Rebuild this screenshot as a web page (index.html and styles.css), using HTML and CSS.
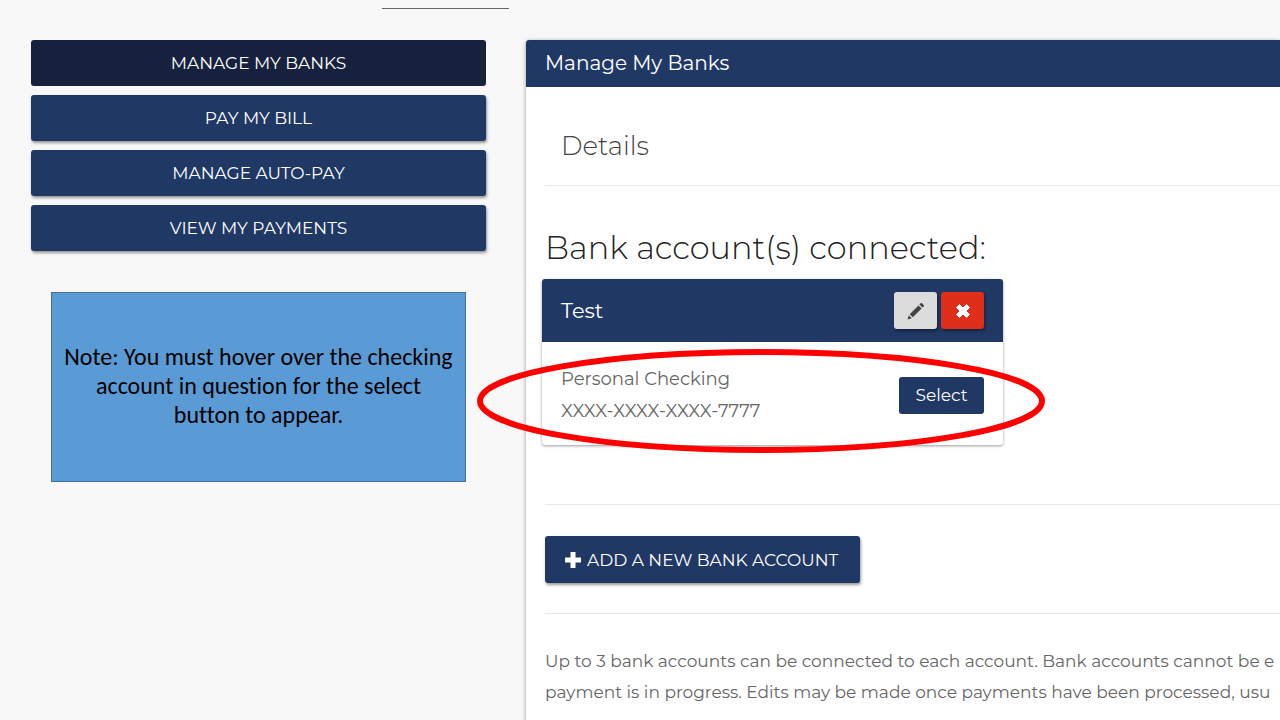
FILE: index.html
```html
<!DOCTYPE html>
<html lang="en">
<head>
  <meta charset="UTF-8">
  <meta name="viewport" content="width=device-width, initial-scale=1.0">
  <title>Manage My Banks</title>
  <link rel="stylesheet" href="styles.css">
</head>
<body>

  <header class="top"><div class="top-line"></div></header>

  <div class="page">
    <!-- Left column -->
    <aside class="sidebar">
      <nav class="menu">
        <button type="button" class="btn btn-menu active">MANAGE MY BANKS</button>
        <button type="button" class="btn btn-menu">PAY MY BILL</button>
        <button type="button" class="btn btn-menu">MANAGE AUTO-PAY</button>
        <button type="button" class="btn btn-menu">VIEW MY PAYMENTS</button>
      </nav>
      <p class="note">Note: You must hover over the checking account in question for the select button to appear.</p>
    </aside>

    <!-- Main panel -->
    <main class="panel">
      <h1 class="panel-title">Manage My Banks</h1>
      <div class="panel-body">
        <h3 class="details">Details</h3>

        <section class="accounts">
          <h2 class="accounts-title">Bank account(s) connected:</h2>
          <div class="card">
            <div class="card-head">
              <span class="card-name">Test</span>
              <div class="card-tools">
                <button type="button" class="btn btn-icon btn-edit" aria-label="Edit">
                  <svg width="18" height="18" viewBox="0 0 18 18"><path d="M.5 17.500l1.300-4.300 3 3zM2.700 12.200L11.500 3.400l3.100 3.100-8.800 8.800zM12.400 2.500l1.200-1.200c.4-.4 1-.4 1.400 0L16.700 3c.4.4.4 1 0 1.400l-1.200 1.200z" fill="#444"/></svg>
                </button>
                <button type="button" class="btn btn-icon btn-delete" aria-label="Delete">
                  <svg width="14" height="14" viewBox="0 0 14 14"><path d="M3.500.5L7 4l3.500-3.500 3 3L10 7l3.500 3.500-3 3L7 10l-3.500 3.500-3-3L4 7 .5 3.500z" fill="#fff" stroke="#fff" stroke-linejoin="round"/></svg>
                </button>
              </div>
            </div>
            <div class="card-body">
              <div class="card-info">
                <div>Personal Checking</div>
                <div>XXXX-XXXX-XXXX-7777</div>
              </div>
              <button type="button" class="btn btn-select">Select</button>
            </div>
            <!-- red ring around the account row -->
            <svg class="ring" viewBox="0 0 568 104"><ellipse cx="284" cy="52" rx="281" ry="49" fill="none" stroke="#f00" stroke-width="6"/></svg>
          </div>
        </section>

        <div class="add-row">
          <button type="button" class="btn btn-add">
            <svg width="16" height="16" viewBox="0 0 16 16"><path d="M5.500 0h5v5.500H16v5h-5.500V16h-5v-5.500H0v-5h5.500z" fill="#fff"/></svg>
            ADD A NEW BANK ACCOUNT
          </button>
        </div>

        <p class="help">Up to 3 bank accounts can be connected to each account. Bank accounts cannot be e<br>payment is in progress. Edits may be made once payments have been processed, usu</p>
      </div>
    </main>
  </div>

</body>
</html>
```
FILE: styles.css
```css
* {
  box-sizing: border-box;
}

body {
  margin: 0;
  background: #f8f8f8;
  color: #666;
  font-family: Montserrat, Inter, sans-serif;
  font-size: 17px;
  overflow: hidden;
}

.top {
  height: 40px;
  padding: 8px 0 0 382px;
}

.top-line {
  width: 127px;
  border-top: 1px solid #666;
}

.page {
  display: grid;
  grid-template-columns: minmax(280px, 455px) minmax(0, 1fr);
  gap: 40px;
  padding-left: 31px;
}

/* Buttons */
.btn {
  border: none;
  border-radius: 3px;
  background: #203864;
  color: #fff;
  font-family: inherit;
  font-size: 17px;
  cursor: pointer;
  box-shadow: 1px 2px 3px rgba(0, 0, 0, 0.4);
}

.menu {
  display: grid;
  gap: 9px;
}

.btn-menu {
  height: 46px;
}

.btn-menu.active {
  background: #16223d;
  box-shadow: none;
}

.note {
  margin: 41px 20px 0;
  padding: 49px 10px 52px;
  border: 1px solid #41719c;
  background: #5b9bd5;
  color: #000;
  font-family: Calibri, Carlito, Lato, sans-serif;
  font-size: 24px;
  font-variant-ligatures: none;
  line-height: 29px;
  text-align: center;
}

/* Main panel */
.panel {
  background: #fff;
  border-radius: 3px 0 0 0;
  box-shadow: 0 1px 4px rgba(0, 0, 0, 0.4);
}

.panel-title {
  margin: 0;
  padding: 0 19px;
  border-radius: 3px 0 0 0;
  background: #203864;
  color: #fff;
  font-size: 20px;
  font-weight: 400;
  line-height: 47px;
}

.panel-body {
  padding-left: 19px;
}

.details {
  margin: 0;
  padding: 40px 16px 20px;
  border-bottom: 1px solid #e8e8e8;
  color: #444;
  font-size: 26px;
  font-weight: 300;
  line-height: 38px;
}

.accounts {
  padding: 42px 0 59px;
  border-bottom: 1px solid #e8e8e8;
}

.accounts-title {
  margin: 0 0 11px;
  color: #222;
  font-size: 32px;
  font-weight: 300;
  line-height: 40px;
}

.card {
  position: relative;
  max-width: 461px;
  margin-left: -3px;
  border-radius: 3px;
  box-shadow: 0 1px 3px rgba(0, 0, 0, 0.4);
}

.card-head,
.card-body {
  display: flex;
  align-items: center;
  justify-content: space-between;
  padding: 0 19px;
}

.card-head {
  height: 63px;
  border-radius: 3px 3px 0 0;
  background: #203864;
  color: #fff;
  font-size: 21px;
}

.card-tools {
  display: flex;
  gap: 4px;
}

.btn-icon {
  display: flex;
  align-items: center;
  justify-content: center;
  width: 43px;
  height: 37px;
}

.btn-edit {
  background: #dcdcdc;
}

.btn-delete {
  background: #df2f1b;
}

.card-body {
  padding-top: 21px;
  padding-bottom: 18px;
}

.card-info {
  font-size: 18px;
  line-height: 32px;
}

.btn-select {
  width: 85px;
  height: 37px;
  box-shadow: none;
}

.ring {
  position: absolute;
  top: 70px;
  left: -65px;
  width: 568px;
  height: 104px;
  pointer-events: none;
}

.add-row {
  padding: 31px 0 30px;
  border-bottom: 1px solid #e8e8e8;
}

.btn-add {
  display: flex;
  align-items: center;
  gap: 6px;
  height: 47px;
  padding: 0 22px 0 20px;
}

.help {
  margin: 0;
  padding: 32px 0;
  line-height: 31px;
  white-space: nowrap;
}
```
